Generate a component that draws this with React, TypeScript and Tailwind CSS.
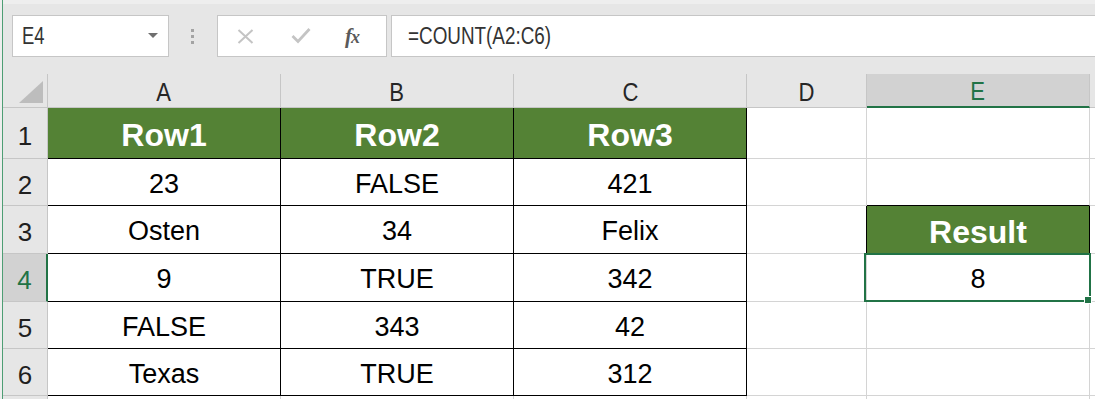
import React from "react";

const SANS = "font-['Liberation_Sans',Arial,sans-serif]";

const table: string[][] = [
  ["Row1", "Row2", "Row3"],
  ["23", "FALSE", "421"],
  ["Osten", "34", "Felix"],
  ["9", "TRUE", "342"],
  ["FALSE", "343", "42"],
  ["Texas", "TRUE", "312"],
];

const rowHeights = ["h-[51px]", "h-[47px]", "h-[48px]", "h-[48px]", "h-[47px]", "h-[47px]"];

function CancelIcon() {
  return (
    <svg width="17" height="15" viewBox="0 0 17 15" fill="none">
      <path d="M1.5 1 L15.5 14 M15.5 1 L1.5 14" stroke="#c4c4c4" strokeWidth="2" />
    </svg>
  );
}

function EnterIcon() {
  return (
    <svg width="20" height="17" viewBox="0 0 20 17" fill="none">
      <path d="M1.5 9 L7 14.5 L18.5 2" stroke="#c4c4c4" strokeWidth="2.8" />
    </svg>
  );
}

function CornerTriangle() {
  return (
    <svg width="24" height="22" viewBox="0 0 24 22">
      <polygon points="24,0 24,22 0,22" fill="#bdbdbd" />
    </svg>
  );
}

function FormulaBar() {
  return (
    <div className="flex h-[74px] shrink-0 items-start border-t-[4px] border-t-[#eeeeee] bg-[#e6e6e6] pt-[11px]">
      {/* name box */}
      <div className="ml-[9px] flex h-[42px] w-[157px] shrink-0 items-center justify-between border border-[#c6c6c6] bg-white pl-[9px] pr-[10px]">
        <span className="origin-left scale-x-[0.8] text-[23px] leading-none text-[#333333]">E4</span>
        <svg width="10" height="6" viewBox="0 0 10 6">
          <polygon points="0,0 10,0 5,5" fill="#6f6f6f" />
        </svg>
      </div>
      {/* grip dots */}
      <div className="ml-[22px] mt-[14px] flex flex-col gap-[3px]">
        <div className="h-[3px] w-[3px] bg-[#a3a3a3]" />
        <div className="h-[3px] w-[3px] bg-[#a3a3a3]" />
        <div className="h-[3px] w-[3px] bg-[#a3a3a3]" />
      </div>
      {/* cancel / enter / insert function */}
      <div className="ml-[23px] flex h-[42px] w-[170px] shrink-0 items-center border border-[#c6c6c6] bg-white">
        <div className="ml-[19px]">
          <CancelIcon />
        </div>
        <div className="ml-[37px] mt-[-2px]">
          <EnterIcon />
        </div>
        <div className="ml-[34px] flex items-baseline font-['Liberation_Serif',serif] font-bold italic text-[#5a5a5a]">
          <span className="text-[21px] leading-none">f</span>
          <span className="ml-[-1px] text-[18px] leading-none">x</span>
        </div>
      </div>
      {/* formula input */}
      <div className="ml-[4px] flex h-[42px] flex-1 items-center border border-r-0 border-[#c6c6c6] bg-white pl-[16px]">
        <span className="origin-left scale-x-[0.82] whitespace-nowrap text-[23px] leading-none text-[#333333]">
          =COUNT(A2:C6)
        </span>
      </div>
    </div>
  );
}

function ColumnHeaders() {
  const letters = ["A", "B", "C", "D"];
  return (
    <>
      <div className="flex h-[34px] items-end justify-end border-b border-r border-[#c6c6c6] bg-[#e6e6e6] pb-[4px] pr-[4px]">
        <CornerTriangle />
      </div>
      {letters.map((l) => (
        <div
          key={l}
          className="flex h-[34px] items-center justify-center border-b border-r border-[#c6c6c6] bg-[#e6e6e6] pt-[2px] text-[26px] leading-none text-[#262626]"
        >
          <span className="scale-x-[0.85]">{l}</span>
        </div>
      ))}
      <div className="flex h-[34px] items-center justify-center border-r border-r-[#c6c6c6] border-b-2 border-b-[#217346] bg-[#d2d2d2] pt-[2px] text-[26px] leading-none text-[#217346]">
        <span className="scale-x-[0.85]">E</span>
      </div>
      <div className="h-[34px] border-b border-[#c6c6c6] bg-[#e6e6e6]" />
    </>
  );
}

function RowHeader({ n, active, h }: { n: number; active: boolean; h: string }) {
  return active ? (
    <div
      className={`${h} flex items-center justify-center border-r-2 border-r-[#217346] border-b border-b-[#c6c6c6] bg-[#d2d2d2] pt-[5px] text-[26px] leading-none text-[#217346]`}
    >
      {n}
    </div>
  ) : (
    <div
      className={`${h} flex items-center justify-center border-b border-r border-[#c6c6c6] bg-[#e6e6e6] pt-[5px] text-[26px] leading-none text-[#1f1f1f]`}
    >
      {n}
    </div>
  );
}

function DataCell({ text, header, h }: { text: string; header: boolean; h: string }) {
  return header ? (
    <div
      className={`${h} flex items-center justify-center border-b border-r border-black bg-[#548235] pt-[4px] text-[32px] font-bold leading-none text-white`}
    >
      {text}
    </div>
  ) : (
    <div
      className={`${h} flex items-center justify-center border-b border-r border-black bg-white pt-[4px] text-[27px] leading-none text-black`}
    >
      {text}
    </div>
  );
}

function DCell({ row, h }: { row: number; h: string }) {
  return row === 3 ? (
    <div className={`${h} border-r border-r-black border-b border-b-[#d4d4d4] bg-white`} />
  ) : (
    <div className={`${h} border-b border-r border-[#d4d4d4] bg-white`} />
  );
}

function ECell({ row, h }: { row: number; h: string }) {
  if (row === 2) {
    return <div className={`${h} border-r border-r-[#d4d4d4] border-b border-b-black bg-white`} />;
  }
  if (row === 3) {
    return (
      <div
        className={`${h} flex items-center justify-center border-b border-r border-black bg-[#548235] pt-[4px] text-[32px] font-bold leading-none text-white`}
      >
        Result
      </div>
    );
  }
  if (row === 4) {
    return (
      <div
        className={`${h} relative flex items-center justify-center border-b border-r border-[#d4d4d4] bg-white pt-[4px] text-[27px] leading-none text-black`}
      >
        8
        {/* active cell outline and fill handle */}
        <div className="pointer-events-none absolute -bottom-[1px] -left-[3px] -right-[2px] -top-[1px] border-2 border-[#217346]" />
        <div className="absolute left-[217px] top-[42px] h-[8px] w-[8px] border border-white bg-[#217346]" />
      </div>
    );
  }
  return <div className={`${h} border-b border-r border-[#d4d4d4] bg-white`} />;
}

export default function App() {
  return (
    <div className={`${SANS} flex h-[399px] w-full overflow-hidden bg-white`}>
      <div className="w-[3px] shrink-0 border-r border-r-[#4e9e74] bg-[#eeeeee]" />
      <div className="flex min-w-0 flex-1 flex-col">
        <FormulaBar />
        <div className="grid grid-cols-[45px_233px_233px_233px_120px_223px_1fr]">
          <ColumnHeaders />
          {table.map((cells, i) => {
            const row = i + 1;
            const h = rowHeights[i];
            return (
              <React.Fragment key={row}>
                <RowHeader n={row} active={row === 4} h={h} />
                {cells.map((t, j) => (
                  <DataCell key={j} text={t} header={row === 1} h={h} />
                ))}
                <DCell row={row} h={h} />
                <ECell row={row} h={h} />
                <div className={`${h} border-b border-[#d4d4d4] bg-white`} />
              </React.Fragment>
            );
          })}
          {/* top edge of the next row */}
          <div className="h-[47px] border-r border-[#c6c6c6] bg-[#e6e6e6]" />
          <div className="h-[47px] border-r border-[#d4d4d4] bg-white" />
          <div className="h-[47px] border-r border-[#d4d4d4] bg-white" />
          <div className="h-[47px] border-r border-[#d4d4d4] bg-white" />
          <div className="h-[47px] border-r border-[#d4d4d4] bg-white" />
          <div className="h-[47px] border-r border-[#d4d4d4] bg-white" />
          <div className="h-[47px] bg-white" />
        </div>
      </div>
    </div>
  );
}
